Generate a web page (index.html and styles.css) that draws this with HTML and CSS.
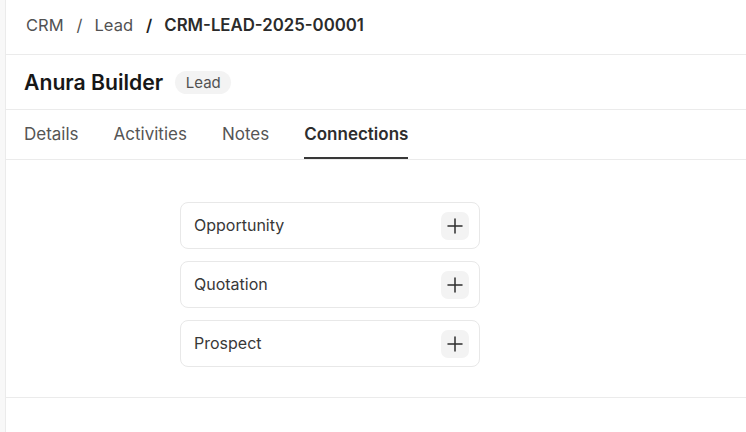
FILE: index.html
```html
<!DOCTYPE html>
<html>
<head>
<meta charset="utf-8">
<link rel="stylesheet" href="styles.css">
</head>
<body>
<div class="app">
  <div class="rail"></div>
  <div class="main">
    <div class="crumbs">
      <span class="crumb">CRM</span>
      <span class="sep">/</span>
      <span class="crumb">Lead</span>
      <span class="sep dark">/</span>
      <span class="crumb current">CRM-LEAD-2025-00001</span>
    </div>
    <div class="titlebar">
      <h1 class="title">Anura Builder</h1>
      <span class="badge">Lead</span>
    </div>
    <div class="tabs">
      <span class="tab">Details</span>
      <span class="tab">Activities</span>
      <span class="tab">Notes</span>
      <span class="tab active">Connections</span>
    </div>
    <div class="content">
      <div class="cards">
        <div class="card"><span class="label">Opportunity</span><button class="add"><svg width="18" height="18" viewBox="0 0 18 18"><path d="M9 2v14M2 9h14" stroke="#2e2e2e" stroke-width="1.5" stroke-linecap="round"/></svg></button></div>
        <div class="card"><span class="label">Quotation</span><button class="add"><svg width="18" height="18" viewBox="0 0 18 18"><path d="M9 2v14M2 9h14" stroke="#2e2e2e" stroke-width="1.5" stroke-linecap="round"/></svg></button></div>
        <div class="card"><span class="label">Prospect</span><button class="add"><svg width="18" height="18" viewBox="0 0 18 18"><path d="M9 2v14M2 9h14" stroke="#2e2e2e" stroke-width="1.5" stroke-linecap="round"/></svg></button></div>
      </div>
    </div>
  </div>
</div>
</body>
</html>
```

FILE: styles.css
```css
* { box-sizing: border-box; }
html, body { margin: 0; padding: 0; background: #fff; }
body { font-family: Inter, "Noto Sans", sans-serif; color: #171717; }
.app { display: flex; min-height: 432px; }
.rail { width: 6px; background: #f8f8f8; border-right: 1px solid #ebebeb; flex: none; }
.main { flex: 1; min-width: 0; }
.crumbs {
  height: 55px; display: flex; align-items: center; padding: 0 0 4px 20px;
  border-bottom: 1px solid #ebebeb; font-size: 16.5px;
}
.crumb { color: #525252; }
.sep { color: #525252; margin: 0 12px 0 13px; }
.sep.dark { color: #1f1f1f; font-weight: 600; margin: 0 12px 0 13px; }
.crumb.current { color: #2b2b2b; font-weight: 600; font-size: 16.8px; }
.titlebar {
  height: 55px; display: flex; align-items: center; padding: 0 0 0 18px;
  border-bottom: 1px solid #ebebeb;
}
.title { margin: 0; font-size: 21.2px; font-weight: 600; color: #171717; }
.badge {
  margin-left: 12px; height: 23px; padding: 0 10.5px; border-radius: 12px;
  background: #f3f3f3; color: #525252; font-size: 15px; display: flex; align-items: center;
}
.tabs {
  height: 50px; display: flex; gap: 35px; padding: 0 0 0 18px;
  border-bottom: 1px solid #ebebeb;
}
.tab {
  display: flex; align-items: center; font-size: 17px; color: #555;
  border-bottom: 2px solid transparent; padding-top: 1px;
}
.tab.active { color: #2d2d2d; font-weight: 600; border-bottom-color: #383838; }
.content { padding: 42px 0 30px 174px; border-bottom: 1px solid #ebebeb; }
.cards { display: flex; flex-direction: column; gap: 12px; width: 300px; }
.card {
  height: 47px; border: 1px solid #e8e8e8; border-radius: 8px;
  display: flex; align-items: center; justify-content: space-between;
  padding: 0 10px 1px 13px;
}
.label { font-size: 16px; color: #383838; }
.add {
  width: 28px; height: 28px; border: 0; border-radius: 7px; background: #f3f3f3;
  display: flex; align-items: center; justify-content: center; padding: 0; margin-top: 1px;
}
.add svg { display: block; }
```
